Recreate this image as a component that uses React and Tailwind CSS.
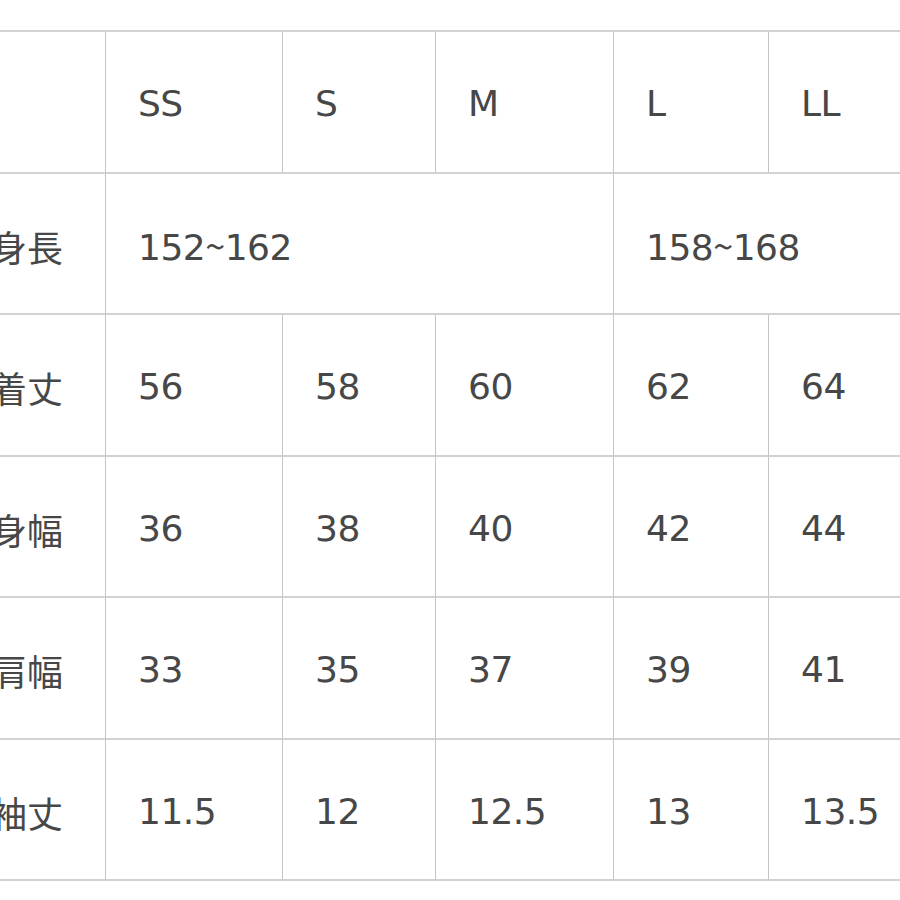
import React from "react";

function Cell({ children, span, last }) {
  return (
    <div
      className={`flex h-[141.5px] items-center border-b-2 border-[#d2d2d2] ${
        last ? "" : "border-r border-r-[#c4c4c4]"
      } ${span === 3 ? "col-span-3" : span === 2 ? "col-span-2" : ""} pl-[32px] pt-[5px] text-[36px] leading-none tracking-[-0.5px] text-[#474747]`}
    >
      {children}
    </div>
  );
}

function Label({ children }) {
  return (
    <div className="flex h-[141.5px] items-center border-b-2 border-r border-[#d2d2d2] border-r-[#c4c4c4] pl-[34px] pt-[5px] font-['Noto_Sans_CJK_JP',sans-serif] text-[36px] leading-none text-[#474747]">
      {children}
    </div>
  );
}

function Range({ a, b }) {
  return (
    <span>
      {a}
      <span className="font-['Noto_Sans_CJK_JP',sans-serif]">~</span>
      {b}
    </span>
  );
}

export default function App() {
  const rows = [
    ["着丈", ["56", "58", "60", "62", "64"]],
    ["身幅", ["36", "38", "40", "42", "44"]],
    ["肩幅", ["33", "35", "37", "39", "41"]],
    ["袖丈", ["11.5", "12", "12.5", "13", "13.5"]],
  ];
  return (
    <div className="h-[900px] w-[900px] overflow-hidden bg-white font-['DejaVu_Sans','Noto_Sans_CJK_JP',sans-serif]">
      <div className="ml-[-43px] mt-[30px] grid w-[967px] grid-cols-[149px_177px_153px_178px_155px_155px] border-t-2 border-[#d2d2d2]">
        <Label>{""}</Label>
        <Cell>SS</Cell>
        <Cell>S</Cell>
        <Cell>M</Cell>
        <Cell>L</Cell>
        <Cell last>LL</Cell>

        <Label>身長</Label>
        <Cell span={3}>
          <Range a="152" b="162" />
        </Cell>
        <Cell span={2} last>
          <Range a="158" b="168" />
        </Cell>

        {rows.map(([name, vals]) => (
          <React.Fragment key={name}>
            <Label>{name}</Label>
            {vals.map((v, i) => (
              <Cell key={i} last={i === 4}>
                {v}
              </Cell>
            ))}
          </React.Fragment>
        ))}
      </div>
    </div>
  );
}
